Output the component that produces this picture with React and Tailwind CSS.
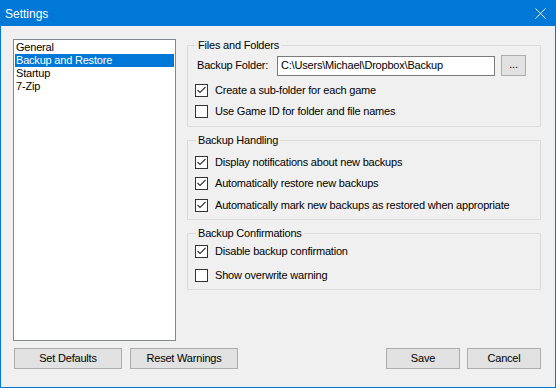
import React from "react";

const font = { fontFamily: '"Liberation Sans", Arial, sans-serif' };

const Check = ({ checked, label, className = "" }) => (
  <div className={`flex items-center h-[13px] ${className}`}>
    <div className="w-[13px] h-[13px] border border-[#333333] bg-white flex items-center justify-center shrink-0">
      {checked && (
        <svg width="11" height="11" viewBox="0 0 11 11">
          <polyline points="1.5,5 4,7.5 9.5,2" fill="none" stroke="#333333" strokeWidth="1.1" />
        </svg>
      )}
    </div>
    <span className="ml-[7px] text-[11px] leading-[13px] text-black whitespace-nowrap">{label}</span>
  </div>
);

const Group = ({ title, className = "", children }) => (
  <div className={`relative border border-[#dcdcdc] w-[354px] ${className}`}>
    <span className="absolute left-[8px] top-[-7px] px-[2px] bg-[#f0f0f0] text-[11px] leading-[13px] text-black">
      {title}
    </span>
    {children}
  </div>
);

const Btn = ({ children, className = "" }) => (
  <button className={`h-[21px] bg-[#e1e1e1] border border-[#adadad] text-[11px] text-black leading-[13px] ${className}`}>
    {children}
  </button>
);

const App = () => {
  const items = ["General", "Backup and Restore", "Startup", "7-Zip"];
  const selected = 1;

  return (
    <div style={font} className="w-[556px] h-[388px] bg-[#f0f0f0] border border-[#0078d7] flex flex-col tracking-[-0.2px]">
      <div className="h-[25px] bg-[#0078d7] flex items-center justify-between shrink-0">
        <span className="ml-[4px] text-white text-[12px] tracking-normal">Settings</span>
        <svg width="11" height="11" viewBox="0 0 11 11" className="mr-[9px]">
          <path d="M0.5 0.5 L10.5 10.5 M10.5 0.5 L0.5 10.5" stroke="white" strokeWidth="1" />
        </svg>
      </div>

      <div className="flex items-start">
        <div className="ml-[12px] mt-[13px] w-[163px] h-[302px] bg-white border border-[#828790] p-[1px]">
          {items.map((it, i) => (
            <div
              key={it}
              className={`h-[13px] pl-[1px] text-[11px] leading-[13px] ${
                i === selected ? "bg-[#0078d7] text-white" : "text-black"
              }`}
            >
              {it}
            </div>
          ))}
        </div>

        <div className="ml-[11px] mt-[19px] flex flex-col">
          <Group title="Files and Folders" className="h-[82px]">
            <div className="flex items-center mt-[9px] ml-[9px]">
              <span className="w-[80px] text-[11px] leading-[13px] text-black">Backup Folder:</span>
              <div className="w-[218px] h-[20px] bg-white border border-[#7a7a7a] flex items-center pl-[3px] text-[11px] text-black">
                C:\Users\Michael\Dropbox\Backup
              </div>
              <Btn className="ml-[6px] w-[25px] h-[18px] flex items-center justify-center pb-[3px]">...</Btn>
            </div>
            <div className="ml-[7px]">
              <Check checked label="Create a sub-folder for each game" className="mt-[8px]" />
              <Check label="Use Game ID for folder and file names" className="mt-[8px]" />
            </div>
          </Group>

          <Group title="Backup Handling" className="h-[80px] mt-[13px]">
            <div className="ml-[7px]">
              <Check checked label="Display notifications about new backups" className="mt-[15px]" />
              <Check checked label="Automatically restore new backups" className="mt-[8px]" />
              <Check checked label="Automatically mark new backups as restored when appropriate" className="mt-[9px]" />
            </div>
          </Group>

          <Group title="Backup Confirmations" className="h-[57px] mt-[13px]">
            <div className="ml-[7px]">
              <Check checked label="Disable backup confirmation" className="mt-[11px]" />
              <Check label="Show overwrite warning" className="mt-[11px]" />
            </div>
          </Group>
        </div>
      </div>

      <div className="flex items-center mt-[7px] ml-[13px]">
        <Btn className="w-[108px]">Set Defaults</Btn>
        <Btn className="w-[108px] ml-[8px]">Reset Warnings</Btn>
        <Btn className="w-[74px] ml-[148px]">Save</Btn>
        <Btn className="w-[74px] ml-[7px]">Cancel</Btn>
      </div>
    </div>
  );
};

export default App;
